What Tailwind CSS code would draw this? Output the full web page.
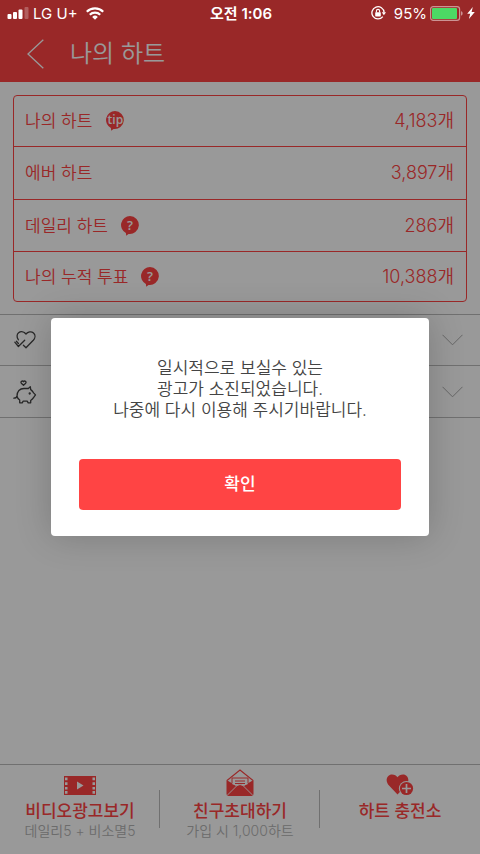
<!DOCTYPE html>
<html lang="ko">
<head>
<meta charset="utf-8">
<meta name="viewport" content="width=device-width, initial-scale=1">
<title>나의 하트</title>
<script src="https://cdn.jsdelivr.net/npm/@tailwindcss/browser@4"></script>
</head>
<body class="bg-white font-['Inter','Noto_Sans_CJK_KR',sans-serif]">
<div class="relative flex min-h-screen flex-col">

  <!-- Status bar, kept above the dimmed layer -->
  <div class="absolute inset-x-0 top-0 z-20 grid h-[26px] grid-cols-3 items-center pl-[7px] pr-[5px] text-[15px] leading-none text-white">
    <div class="flex items-center">
      <svg class="h-3 w-[22px]" viewBox="0 0 22 12" fill="currentColor" aria-hidden="true">
        <rect x="0.5" y="7" width="4" height="5" rx="1"/><rect x="6" y="5" width="4" height="7" rx="1"/><rect x="11.5" y="2.500" width="4" height="9.500" rx="1"/><rect x="17.500" y="0" width="4" height="12" rx="1" opacity=".25"/>
      </svg>
      <span class="ml-1 font-['Inter',sans-serif]">LG U+</span>
      <svg class="ml-2 h-[13px] w-[18px]" viewBox="0 0 18 13" fill="none" stroke="currentColor" stroke-width="2.200" aria-hidden="true">
        <path d="M.8 4.700a11.700 11.700 0 0 1 16.400 0"/><path d="M3.800 7.800a7.400 7.400 0 0 1 10.400 0"/><path d="M6.200 9.900a4 4 0 0 1 5.600 0L9 12.800z" fill="currentColor" stroke="none"/>
      </svg>
    </div>
    <div class="whitespace-nowrap text-center text-[15px] font-semibold">오전 1:06</div>
    <div class="flex items-center justify-end">
      <svg class="h-[14px] w-[15px]" viewBox="0 0 15 14" fill="none" stroke="currentColor" aria-hidden="true">
        <path d="M11.800 10.600A6.100 6.100 0 1 1 13.100 6.500" stroke-width="1.300"/><path d="M10.800 6.300h4.200L12.900 9.200z" fill="currentColor" stroke="none"/><rect x="4.200" y="6.200" width="5.600" height="4.200" rx=".6" fill="currentColor" stroke="none"/><path d="M5.400 6.500V5a1.600 1.600 0 0 1 3.200 0v1.500" stroke-width="1.100"/>
      </svg>
      <span class="ml-2 font-['Inter',sans-serif]">95%</span>
      <svg class="ml-[3px] h-[15px] w-[34px]" viewBox="0 0 34 15" aria-hidden="true">
        <rect x=".6" y=".6" width="29" height="13.800" rx="2.600" fill="none" stroke="#fff" stroke-opacity=".5" stroke-width="1.200"/><rect x="2" y="2" width="25" height="11" rx="1" fill="#4cd964"/><path d="M31 5.300c2.200.5 2.200 3.900 0 4.400z" fill="#fff" fill-opacity=".5"/>
      </svg>
      <svg class="ml-[3px] h-3 w-2" viewBox="0 0 8 12" fill="currentColor" aria-hidden="true"><path d="M5.800 0 .2 6.700h3L1.900 12l5.900-7H4.600z"/></svg>
    </div>
  </div>

  <header class="flex h-[82px] items-center bg-[#ff4444] pl-[27px] pt-[26px] text-white">
    <button type="button" aria-label="뒤로" class="h-[30px] w-[17px]">
      <svg class="h-[30px] w-[17px]" viewBox="0 0 17 30" fill="none" stroke="currentColor" stroke-width="1.300"><path d="M16.300.8 1 15l15.300 14.200"/></svg>
    </button>
    <h1 class="ml-[26px] text-[24px] font-[350] leading-[30px]">나의 하트</h1>
  </header>

  <main class="flex-1">
    <div class="mx-[13px] mt-[13px] rounded border border-[#ff4444]">
      <table class="w-full border-separate border-spacing-0 text-[17px] font-[350] leading-6 text-[#ff4444]">
        <tbody>
          <tr class="h-[51px]">
            <th scope="row" class="border-b border-[#ff4444] pl-[11px] text-left font-[350]"><span class="flex items-center">나의 하트
              <button type="button" aria-label="나의 하트 도움말" class="ml-[14px] h-5 w-[18px]"><svg class="h-5 w-[18px]" viewBox="0 0 18 20"><path d="M9 0a9 9 0 1 1-1.500 17.900L5.200 19.800l-.3-2.800A9 9 0 0 1 9 0z" fill="#ff4444"/><text x="9.400" y="12.800" text-anchor="middle" font-family="Open Sans, sans-serif" font-size="12" font-weight="600" fill="#fff">tip</text></svg></button></span></th>
            <td class="border-b border-[#ff4444] pr-3 text-right text-[18px]">4,183개</td>
          </tr>
          <tr class="h-[53px]">
            <th scope="row" class="border-b border-[#ff4444] pl-[11px] text-left font-[350]">에버 하트</th>
            <td class="border-b border-[#ff4444] pr-3 text-right text-[18px]">3,897개</td>
          </tr>
          <tr class="h-[52px]">
            <th scope="row" class="border-b border-[#ff4444] pl-[11px] text-left font-[350]"><span class="flex items-center">데일리 하트
              <button type="button" aria-label="데일리 하트 도움말" class="ml-[13px] h-5 w-[18px]"><svg class="h-5 w-[18px]" viewBox="0 0 18 20"><path d="M9 0a9 9 0 1 1-1.500 17.900L5.200 19.800l-.3-2.800A9 9 0 0 1 9 0z" fill="#ff4444"/><text x="9" y="13.600" text-anchor="middle" font-family="Open Sans, sans-serif" font-size="13" font-weight="600" fill="#fff">?</text></svg></button></span></th>
            <td class="border-b border-[#ff4444] pr-3 text-right text-[18px]">286개</td>
          </tr>
          <tr class="h-[49px]">
            <th scope="row" class="pl-[11px] text-left font-[350]"><span class="flex items-center">나의 누적 투표
              <button type="button" aria-label="나의 누적 투표 도움말" class="ml-[13px] h-5 w-[18px]"><svg class="h-5 w-[18px]" viewBox="0 0 18 20"><path d="M9 0a9 9 0 1 1-1.500 17.900L5.200 19.800l-.3-2.800A9 9 0 0 1 9 0z" fill="#ff4444"/><text x="9" y="13.600" text-anchor="middle" font-family="Open Sans, sans-serif" font-size="13" font-weight="600" fill="#fff">?</text></svg></button></span></th>
            <td class="pr-3 text-right text-[18px]">10,388개</td>
          </tr>
        </tbody>
      </table>
    </div>

    <div class="mt-3 border-t border-[#bbb] text-[#444]">
      <button type="button" aria-label="하트 사용" class="flex h-[51px] w-full items-center justify-between border-b border-[#bbb] pl-[13px] pr-[17px]">
        <svg class="h-6 w-6" viewBox="0 0 24 24" fill="none" stroke="currentColor" stroke-width="1.300" stroke-linecap="round" stroke-linejoin="round"><path d="M5.400 11.800C3.300 9.300 3.900 6 5.600 4.700c2.400-1.900 5.500-1 7.400 1.300 1.800-2.300 5.300-3 7.500-1.100 2.200 2 1.800 5.100-.2 7.300L13 19.800l-2.600-2.600"/><path d="m1.800 14.200 3.600 4.300 6.300-6.300M5.400 15.500l-2-2.300"/></svg>
        <svg class="h-3 w-[21px] text-[#aaa]" viewBox="0 0 21 12" fill="none" stroke="currentColor"><path d="m.5.8 10 10 10-10"/></svg>
      </button>
      <button type="button" aria-label="하트 적립" class="flex h-[52px] w-full items-center justify-between border-b border-[#bbb] pl-[13px] pr-[17px]">
        <svg class="h-6 w-6" viewBox="0 0 24 24" fill="none" stroke="currentColor" stroke-width="1.300" stroke-linecap="round" stroke-linejoin="round"><path d="M10.500 5.300 8.300 3.200C7.300 1.800 9.300.2 10.500 1.700 11.700.2 13.700 1.800 12.700 3.200z"/><path d="M.8 18.200c1.800 0 3-.6 3.200-2 0-4.800 2.700-7.700 7-7.700h4.300l2-1.900.4 3c1.500.9 2.100 2.200 2.900 3.300l1.900 2-1.800 2.400c-1 1.500-1.900 2.300-3 3.200v2.300h-2.500l-1-1.700h-4l-1 1.700H6.700v-2.800c-1.600-1.100-2.500-2.200-2.700-3.800"/><circle cx="16.700" cy="13.500" r=".5" fill="currentColor"/></svg>
        <svg class="h-3 w-[21px] text-[#aaa]" viewBox="0 0 21 12" fill="none" stroke="currentColor"><path d="m.5.8 10 10 10-10"/></svg>
      </button>
    </div>
  </main>

  <nav class="grid h-[90px] grid-cols-3 border-t border-[#bbb] text-center">
    <a href="#" class="flex flex-col items-center pt-[4px]">
      <svg class="h-[30px] w-8" viewBox="0 0 32 30"><path d="M0 7h32v19H0z" fill="#ff4444"/><path d="M1 8.500h2.500v2.700H1zm0 4.700h2.500v2.700H1zm0 4.700h2.500v2.700H1zm0 4.200h2.500v2.700H1zM28.500 8.500H31v2.700h-2.500zm0 4.700H31v2.700h-2.500zm0 4.700H31v2.700h-2.500zm0 4.200H31v2.700h-2.500zM13 12.500l6.500 4-6.500 4z" fill="#fff"/></svg>
      <span class="text-[17px] font-medium leading-6 text-[#ff4444]">비디오광고보기</span>
      <span class="text-[14px] font-[350] leading-4 text-[#b4b4b4]">데일리5 + 비소멸5</span>
    </a>
    <a href="#" class="flex flex-col items-center pt-[4px]">
      <svg class="h-[30px] w-7" viewBox="0 0 28 30"><path d="M1 11.500 14 1l13 10.500" fill="none" stroke="#ff4444" stroke-width="1.100"/><path d="M.5 11 14 19l13.500-8V25a2 2 0 0 1-2 2h-23a2 2 0 0 1-2-2z" fill="#ff4444"/><path d="M6 9h16v6l-5 2.300-3-2-3 2L6 15z" fill="#fff"/><path d="M6 14.500V9h16v5.500" fill="none" stroke="#ff4444"/><path d="M9 12h10M9 14.500h10" stroke="#ff4444"/><path d="M1.200 26.300 11 16.600q3-2.200 6 0l9.800 9.700" fill="#ff4444" stroke="#fff" stroke-width=".9"/></svg>
      <span class="text-[17px] font-medium leading-6 text-[#ff4444]">친구초대하기</span>
      <span class="text-[14px] font-[350] leading-4 text-[#b4b4b4]">가입 시 1,000하트</span>
    </a>
    <a href="#" class="flex flex-col items-center pt-[4px]">
      <svg class="h-[30px] w-7" viewBox="0 0 28 30"><path d="M11.500 25.500 2.300 15.700C-1.200 11 1.300 5.500 6 5.500c2.500 0 4.500 1.200 5.500 2.700 1-1.500 3-2.700 5.500-2.700 4.700 0 7.200 5.500 3.700 10.200z" fill="#ff4444"/><circle cx="20.500" cy="19.500" r="7.600" fill="#fff"/><circle cx="20.500" cy="19.500" r="6.600" fill="#ff4444"/><path d="M20.500 15v9M16 19.500h9" stroke="#fff" stroke-width="1.700"/></svg>
      <span class="text-[17px] font-medium leading-6 text-[#ff4444]">하트 충전소</span>
    </a>
    <div class="pointer-events-none absolute inset-x-0 bottom-[26px] grid h-[38px] grid-cols-3" aria-hidden="true">
      <i class="border-r border-[#bbb]"></i><i class="border-r border-[#bbb]"></i>
    </div>
  </nav>

  <!-- Dimmed layer with the alert -->
  <div class="absolute inset-0 z-10 flex items-center justify-center bg-black/40 px-[51px]">
    <div role="alertdialog" aria-modal="true" aria-describedby="alert-text" class="w-full rounded bg-white px-7 pb-[26px] pt-10 text-center shadow-[0_0_36px_rgba(0,0,0,0.2)]">
      <p id="alert-text" class="text-[17px] font-[350] leading-[21px] text-[#444]">일시적으로 보실수 있는<br>광고가 소진되었습니다.<br>나중에 다시 이용해 주시기바랍니다.</p>
      <button type="button" class="mt-[38px] h-[51px] w-full rounded bg-[#ff4444] pt-px text-[17px] font-medium text-white">확인</button>
    </div>
  </div>
</div>
</body>
</html>
